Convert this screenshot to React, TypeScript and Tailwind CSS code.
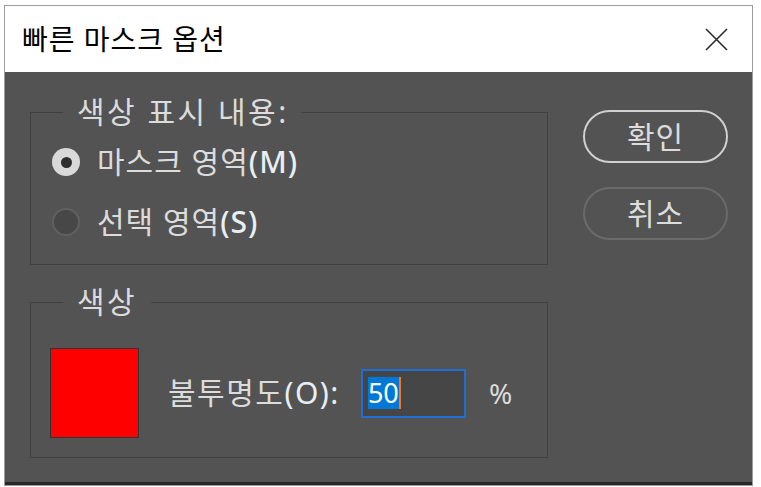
import React from "react";

const font = { fontFamily: "'Noto Sans','Noto Sans CJK KR',sans-serif" };

function Radio({ checked }: { checked: boolean }) {
  return checked ? (
    <span className="flex h-[28px] w-[28px] items-center justify-center rounded-full bg-[#d9d9d9]">
      <span className="h-[11px] w-[11px] rounded-full bg-[#2e2e2e]" />
    </span>
  ) : (
    <span className="h-[28px] w-[28px] rounded-full border-2 border-[#606060] bg-[#474747]" />
  );
}

export default function App() {
  return (
    <div className="h-[487px] w-[761px] bg-white pl-[4px] pt-[5px]" style={font}>
      <div className="w-[749px] border border-[#9c9c9c] bg-white">
        <div className="flex h-[66px] items-center justify-between pl-[17px] pr-[24px]">
          <span className="text-[28px] leading-none tracking-[1px] text-black">빠른 마스크 옵션</span>
          <svg width="23" height="23" viewBox="0 0 23 23">
            <path d="M1 1 L22 22 M22 1 L1 22" stroke="#2b2b2b" strokeWidth="1.6" />
          </svg>
        </div>
        <div className="flex h-[410px] bg-[#535353] pl-[25px] pr-[24px] pt-[38px] text-[#dcdcdc]">
          <div className="mt-[2px] flex w-[518px] flex-col gap-[37px]">
            <div className="relative h-[153px] border border-[#404040]">
              <span className="absolute left-[32px] top-[-16px] bg-[#535353] pl-[14px] pr-[12px] text-[30px] leading-[30px] tracking-[2.5px]">
                색상 표시 내용:
              </span>
              <div className="flex flex-col gap-[20px] pl-[21px] pt-[29px]">
                <div className="flex h-[40px] items-center gap-[17px]">
                  <Radio checked />
                  <span className="text-[30px] leading-none tracking-[1px]">
                    마스크 영역<span className="font-medium text-[#e8eef4]">(M)</span>
                  </span>
                </div>
                <div className="flex h-[40px] items-center gap-[17px]">
                  <Radio checked={false} />
                  <span className="text-[30px] leading-none tracking-[1px]">
                    선택 영역<span className="font-medium text-[#e8eef4]">(S)</span>
                  </span>
                </div>
              </div>
            </div>
            <div className="relative h-[156px] border border-[#404040]">
              <span className="absolute left-[32px] top-[-16px] bg-[#535353] pl-[14px] pr-[14px] text-[30px] leading-[30px] tracking-[2.5px]">
                색상
              </span>
              <div className="flex items-center pl-[19px] pt-[45px]">
                <div className="h-[90px] w-[89px] border border-[#333333] bg-[#ff0000]" />
                <span className="ml-[29px] text-[30px] leading-none tracking-[1.5px]">
                  불투명도<span className="text-[#e8eef4]">(O):</span>
                </span>
                <div className="ml-[21px] flex h-[49px] w-[105px] items-center border-2 border-[#1f6fd6] bg-[#464646] pl-[5px]">
                  <span className="bg-[#0078d7] text-[27px] leading-[32px] text-white">50</span>
                  <span className="h-[32px] w-[2px] bg-[#f07a1a]" />
                </div>
                <span className="ml-[23px] text-[28px] leading-none">%</span>
              </div>
            </div>
          </div>
          <div className="ml-[35px] flex flex-col gap-[24px]">
            <div className="flex h-[53px] w-[145px] items-center justify-center rounded-full border-2 border-[#d0d0d0] text-[30px] leading-none tracking-[1px]">
              확인
            </div>
            <div className="flex h-[53px] w-[145px] items-center justify-center rounded-full border-2 border-[#6a6a6a] text-[30px] leading-none tracking-[1px]">
              취소
            </div>
          </div>
        </div>
        <div className="h-[3px] bg-[#262626]" />
      </div>
    </div>
  );
}
